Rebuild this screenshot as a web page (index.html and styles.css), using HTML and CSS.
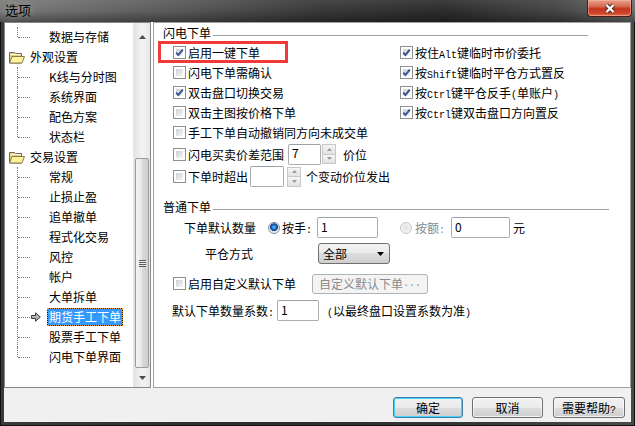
FILE: index.html
```html
<!DOCTYPE html>
<html lang="zh-CN">
<head>
  <meta charset="UTF-8" />
  <title>选项</title>
  <link rel="stylesheet" href="styles.css">
</head>
<body>
  <div class="window">
    <div class="titlebar">
      <span class="title">选项</span>
      <span class="close">
        <svg width="14" height="11" viewBox="0 0 14 11"><path d="M3.5 2 L10.5 9 M10.5 2 L3.5 9" stroke="#4a2a24" stroke-width="4.4"/><path d="M3.5 2 L10.5 9 M10.5 2 L3.5 9" stroke="#fff" stroke-width="2.4"/></svg>
      </span>
    </div>
    <div class="client">
      <div class="main">
        <div class="tree">
          <ul class="nodes">
            <li class="node leaf last"><span class="label">数据与存储</span></li>
            <li class="node folder">
              <svg class="folder-icon" width="16" height="13" viewBox="0 0 16 13"><path d="M0.5 1.5 h5 l1 1 h6 v9.5 h-12 z" fill="#e6d27e" stroke="#6f6a5c"/><path d="M1.5 3.5 h10" stroke="#fff"/><path d="M0.5 12 l2.5 -6.5 h12.5 l-2.5 6.5 z" fill="#fff39a" stroke="#857a52"/></svg>
              <span class="label">外观设置</span>
            </li>
            <li class="node leaf"><span class="label">K线与分时图</span></li>
            <li class="node leaf"><span class="label">系统界面</span></li>
            <li class="node leaf"><span class="label">配色方案</span></li>
            <li class="node leaf last"><span class="label">状态栏</span></li>
            <li class="node folder">
              <svg class="folder-icon" width="16" height="13" viewBox="0 0 16 13"><path d="M0.5 1.5 h5 l1 1 h6 v9.5 h-12 z" fill="#e6d27e" stroke="#6f6a5c"/><path d="M1.5 3.5 h10" stroke="#fff"/><path d="M0.5 12 l2.5 -6.5 h12.5 l-2.5 6.5 z" fill="#fff39a" stroke="#857a52"/></svg>
              <span class="label">交易设置</span>
            </li>
            <li class="node leaf"><span class="label">常规</span></li>
            <li class="node leaf"><span class="label">止损止盈</span></li>
            <li class="node leaf"><span class="label">追单撤单</span></li>
            <li class="node leaf"><span class="label">程式化交易</span></li>
            <li class="node leaf"><span class="label">风控</span></li>
            <li class="node leaf"><span class="label">帐户</span></li>
            <li class="node leaf"><span class="label">大单拆单</span></li>
            <li class="node leaf current">
              <svg class="pointer" width="10" height="10" viewBox="0 0 10 10"><path d="M0.5 3.5 H4.5 V0.8 L9.3 5 L4.5 9.2 V6.5 H0.5 Z" fill="#b4b4b4" stroke="#3c3c3c"/></svg>
              <span class="label selected">期货手工下单</span>
            </li>
            <li class="node leaf"><span class="label">股票手工下单</span></li>
            <li class="node leaf last"><span class="label">闪电下单界面</span></li>
          </ul>
          <div class="vscroll">
            <div class="sbtn up"><svg width="7" height="4" viewBox="0 0 7 4"><path d="M0 4 L3.5 0 L7 4 Z" fill="#4e4e4e"/></svg></div>
            <div class="thumb"><span class="grip"></span></div>
            <div class="sbtn down"><svg width="7" height="4" viewBox="0 0 7 4"><path d="M0 0 L3.5 4 L7 0 Z" fill="#4e4e4e"/></svg></div>
          </div>
        </div>

        <div class="panel">
          <div class="legend legend-flash"><span>闪电下单</span><i class="rule"></i></div>
          <div class="flash-grid">
            <div class="opt">
              <span class="mark-box"></span>
              <span class="cb"><svg width="11" height="11" viewBox="0 0 11 11"><path d="M2.2 5.6 L4.4 8 L8.8 2.6" fill="none" stroke="#3b5795" stroke-width="2"/></svg></span>
              <span>启用一键下单</span>
            </div>
            <div class="opt">
              <span class="cb"><svg width="11" height="11" viewBox="0 0 11 11"><path d="M2.2 5.6 L4.4 8 L8.8 2.6" fill="none" stroke="#3b5795" stroke-width="2"/></svg></span>
              <span>按住<span class="mono">Alt</span>键临时市价委托</span>
            </div>
            <div class="opt">
              <span class="cb"></span>
              <span>闪电下单需确认</span>
            </div>
            <div class="opt">
              <span class="cb"><svg width="11" height="11" viewBox="0 0 11 11"><path d="M2.2 5.6 L4.4 8 L8.8 2.6" fill="none" stroke="#3b5795" stroke-width="2"/></svg></span>
              <span>按<span class="mono">Shift</span>键临时平仓方式置反</span>
            </div>
            <div class="opt">
              <span class="cb"><svg width="11" height="11" viewBox="0 0 11 11"><path d="M2.2 5.6 L4.4 8 L8.8 2.6" fill="none" stroke="#3b5795" stroke-width="2"/></svg></span>
              <span>双击盘口切换交易</span>
            </div>
            <div class="opt">
              <span class="cb"><svg width="11" height="11" viewBox="0 0 11 11"><path d="M2.2 5.6 L4.4 8 L8.8 2.6" fill="none" stroke="#3b5795" stroke-width="2"/></svg></span>
              <span>按<span class="mono">Ctrl</span>键平仓反手<span class="mono">(</span>单账户<span class="mono">)</span></span>
            </div>
            <div class="opt">
              <span class="cb"></span>
              <span>双击主图按价格下单</span>
            </div>
            <div class="opt">
              <span class="cb"><svg width="11" height="11" viewBox="0 0 11 11"><path d="M2.2 5.6 L4.4 8 L8.8 2.6" fill="none" stroke="#3b5795" stroke-width="2"/></svg></span>
              <span>按<span class="mono">Ctrl</span>键双击盘口方向置反</span>
            </div>
          </div>

          <div class="opt row-cancel">
            <span class="cb"></span>
            <span>手工下单自动撤销同方向未成交单</span>
          </div>
          <div class="opt row-spread">
            <span class="cb"></span>
            <span>闪电买卖价差范围</span>
            <span class="field spread-field">7</span>
            <span class="spin"><span class="sp"><svg width="5" height="3" viewBox="0 0 5 3"><path d="M0 3 L2.5 0 L5 3 Z" fill="#9a9a9a"/></svg></span><span class="sp"><svg width="5" height="3" viewBox="0 0 5 3"><path d="M0 0 L2.5 3 L5 0 Z" fill="#9a9a9a"/></svg></span></span>
            <span class="after-spin">价位</span>
          </div>
          <div class="opt row-over">
            <span class="cb"></span>
            <span>下单时超出</span>
            <span class="field over-field"></span>
            <span class="spin"><span class="sp"><svg width="5" height="3" viewBox="0 0 5 3"><path d="M0 3 L2.5 0 L5 3 Z" fill="#9a9a9a"/></svg></span><span class="sp"><svg width="5" height="3" viewBox="0 0 5 3"><path d="M0 0 L2.5 3 L5 0 Z" fill="#9a9a9a"/></svg></span></span>
            <span class="over-text">个变动价位发出</span>
          </div>

          <div class="legend legend-normal"><span>普通下单</span><i class="rule"></i></div>
          <div class="line row-qty">
            <span>下单默认数量</span>
            <span class="radio on"></span>
            <span class="rlabel">按手<span class="mono">:</span></span>
            <span class="field qty-field">1</span>
            <span class="radio off"></span>
            <span class="rlabel amount">按额<span class="mono">:</span></span>
            <span class="field amount-field">0</span>
            <span class="unit">元</span>
          </div>
          <div class="line row-mode">
            <span>平仓方式</span>
            <span class="combo">全部<svg width="7" height="4" viewBox="0 0 7 4"><path d="M0 0 L3.5 4 L7 0 Z" fill="#000"/></svg></span>
          </div>
          <div class="opt row-custom">
            <span class="cb"></span>
            <span>启用自定义默认下单</span>
            <span class="btn-off">自定义默认下单<span class="mono">...</span></span>
          </div>
          <div class="line row-factor">
            <span class="factor-label">默认下单数量系数<span class="mono">:</span></span>
            <span class="field factor-field">1</span>
            <span class="note"><span class="mono">(</span>以最终盘口设置系数为准<span class="mono">)</span></span>
          </div>
        </div>
      </div>

      <div class="footer">
        <button class="btn default">确定</button>
        <button class="btn">取消</button>
        <button class="btn">需要帮助<span class="mono">?</span></button>
      </div>
    </div>
  </div>
</body>
</html>
```

FILE: styles.css
```css
* {
  box-sizing: border-box;
}
body {
  margin: 0;
  background: #1b1b1b;
  font-family: "Noto Sans CJK SC", "Liberation Sans", sans-serif;
  font-size: 12px;
  color: #000;
}
.window {
  width: 635px;
  height: 426px;
  display: flex;
  flex-direction: column;
  background: linear-gradient(90deg, #3a3a3a 0%, #2c2c2c 40%, #343434 70%, #4a4a4a 100%);
  box-shadow: inset 0 0 0 1px #111;
}
.titlebar {
  height: 22px;
  display: flex;
  align-items: flex-start;
  padding-left: 5px;
  background:
    linear-gradient(180deg, rgba(255, 255, 255, 0.08) 0%, rgba(0, 0, 0, 0) 50%, rgba(0, 0, 0, 0.35) 100%),
    linear-gradient(90deg, #7a7a7a 0%, #5c5c5c 25%, #383838 50%, #2c2c2c 70%, #454545 88%, #6e6e6e 100%);
}
.title {
  font-size: 13px;
  line-height: 20px;
  text-shadow: 0 0 6px rgba(255, 255, 255, 0.45);
}
.close {
  margin-left: auto;
  margin-right: 3px;
  width: 45px;
  height: 17px;
  display: flex;
  align-items: center;
  justify-content: center;
  border: 1px solid #4e1c12;
  border-top: none;
  border-radius: 0 0 4px 4px;
  background: linear-gradient(180deg, #e7a08c 0%, #d56a4f 40%, #c0341b 55%, #d1482c 85%, #e07a5c 100%);
  box-shadow: inset 0 0 0 1px rgba(255, 200, 180, 0.45);
}
.client {
  flex: 1;
  margin: 0 4px 4px;
  background: #f0f0f0;
  display: flex;
  flex-direction: column;
}
.main {
  height: 366px;
  display: flex;
  background: #fff;
}

/* tree */
.tree {
  width: 147px;
  border: 1px solid #828790;
  display: flex;
  background: #fff;
}
.nodes {
  list-style: none;
  margin: 0;
  padding: 4px 0 0;
  flex: 1;
  overflow: hidden;
}
.node {
  height: 20px;
  display: flex;
  align-items: center;
  position: relative;
  white-space: nowrap;
}
.label {
  line-height: 16px;
  padding: 0 1px;
  border: 1px solid transparent;
}
.leaf {
  padding-left: 42px;
}
.leaf::before {
  content: "";
  position: absolute;
  left: 12px;
  top: 0;
  bottom: 0;
  border-left: 1px dotted #7a7a7a;
}
.leaf.last::before {
  bottom: 50%;
}
.leaf::after {
  content: "";
  position: absolute;
  left: 13px;
  top: 50%;
  width: 12px;
  border-top: 1px dotted #7a7a7a;
}
.folder {
  padding-left: 4px;
}
.folder-icon {
  margin-right: 3px;
}
.pointer {
  position: absolute;
  left: 26px;
  top: 5px;
}
.label.selected {
  color: #fff;
  border: 1px dotted #f0a030;
  background: linear-gradient(#3399ff, #3399ff) padding-box, #1a1a1a border-box;
}
.vscroll {
  width: 17px;
  display: flex;
  flex-direction: column;
  background: linear-gradient(90deg, #e3e3e3, #f3f3f3 50%, #e8e8e8);
  border-left: 1px solid #e6e6e6;
}
.sbtn {
  display: flex;
  align-items: center;
  justify-content: center;
}
.sbtn.up {
  height: 28px;
}
.sbtn.down {
  height: 18px;
  margin-top: auto;
}
.thumb {
  margin: 107px 1px 1px;
  height: 210px;
  border: 1px solid #9a9a9a;
  border-radius: 2px;
  background: linear-gradient(90deg, #f4f4f4, #e9e9e9 45%, #d8d8d8 55%, #cfcfcf);
  display: flex;
  align-items: center;
  justify-content: center;
}
.grip {
  width: 7px;
  height: 7px;
  background: repeating-linear-gradient(180deg, #555 0, #555 1px, #eee 1px, #eee 2px);
}

/* right panel */
.panel {
  flex: 1;
  margin-left: 2px;
  border: 1px solid #a0a0a0;
  background: #fff;
}
.legend {
  display: flex;
  align-items: center;
  height: 14px;
  padding-left: 9px;
  line-height: 14px;
}
.legend-flash {
  margin-top: 3px;
}
.legend-normal {
  margin-top: 12px;
}
.rule {
  flex: 1;
  height: 1px;
  margin: 4px 0 0 2px;
  background: #a0a0a0;
}
.legend-flash .rule {
  margin-right: 42px;
}
.legend-normal .rule {
  margin-right: 21px;
}
.mono {
  font-family: "Liberation Mono", monospace;
  font-size: 10px;
}
.flash-grid {
  display: grid;
  grid-template-columns: 227px auto;
  grid-auto-rows: 20px;
  margin-top: 2px;
  padding-left: 19px;
}
.opt {
  display: flex;
  align-items: center;
  position: relative;
  white-space: nowrap;
}
.line {
  display: flex;
  align-items: center;
  white-space: nowrap;
}
.cb {
  width: 13px;
  height: 13px;
  margin-right: 2px;
  flex-shrink: 0;
  border: 1px solid #8e8f8f;
  padding: 2px;
  background: linear-gradient(135deg, #cbcfd5, #f6f6f6) content-box, #fff;
  display: flex;
  align-items: center;
  justify-content: center;
}
.cb svg {
  flex-shrink: 0;
}
.mark-box {
  position: absolute;
  left: -15px;
  top: -1px;
  width: 130px;
  height: 22px;
  border: 3px solid #f03a3a;
}
.row-cancel {
  height: 21px;
  padding-left: 19px;
}
.row-spread {
  height: 22px;
  padding-left: 19px;
}
.row-over {
  height: 23px;
  padding-left: 19px;
}
.field {
  height: 21px;
  border: 1px solid #abadb3;
  border-top-color: #9aa0a8;
  border-radius: 2px;
  background: #fff;
  padding: 0 3px;
  line-height: 18px;
  font-size: 12px;
}
.spread-field {
  width: 33px;
  margin-left: 4px;
  line-height: 15px;
}
.over-field {
  width: 34px;
  margin-left: 2px;
}
.spin {
  width: 14px;
  height: 20px;
  display: flex;
  flex-direction: column;
}
.row-spread .spin {
  margin-left: 1px;
}
.row-over .spin {
  margin-left: 3px;
}
.sp {
  flex: 1;
  display: flex;
  align-items: center;
  justify-content: center;
  border: 1px solid #c8c8c8;
  background: linear-gradient(#f6f6f6, #e2e2e2);
}
.sp + .sp {
  border-top: none;
}
.after-spin {
  margin-left: 7px;
}
.over-text {
  margin-left: 5px;
}
.row-qty {
  height: 21px;
  margin-top: 3px;
  padding-left: 30px;
}
.radio {
  width: 12px;
  height: 12px;
  border-radius: 50%;
  flex-shrink: 0;
}
.radio.on {
  margin-left: 12px;
  border: 1px solid #7e8a99;
  background: radial-gradient(circle at 50% 42%, #8fd6ff 0, #2a86d8 1.6px, #0d3f8e 3.6px, #dfe3e8 4.2px, #f8f8f8 6px);
}
.radio.off {
  margin-left: 22px;
  border: 1px solid #c6c6c6;
  background: radial-gradient(circle at 50% 45%, #e2e2e2 0, #ececec 3px, #f6f6f6 6px);
}
.rlabel {
  width: 35px;
  margin-left: 2px;
}
.rlabel.amount {
  width: 36px;
  margin-left: 3px;
  color: #8a8a8a;
}
.qty-field {
  width: 61px;
}
.amount-field {
  width: 59px;
}
.unit {
  margin-left: 3px;
}
.row-mode {
  height: 21px;
  margin-top: 5px;
  padding-left: 51px;
}
.combo {
  width: 72px;
  height: 21px;
  margin-left: 65px;
  display: flex;
  align-items: center;
  justify-content: space-between;
  padding: 0 5px 0 4px;
  border: 1px solid #707070;
  border-radius: 3px;
  background: linear-gradient(180deg, #f2f2f2 0%, #ebebeb 50%, #dddddd 50%, #cfcfcf 100%);
}
.row-custom {
  height: 21px;
  margin-top: 9px;
  padding-left: 19px;
}
.btn-off {
  width: 116px;
  height: 20px;
  margin-left: 16px;
  display: flex;
  align-items: center;
  justify-content: center;
  border: 1px solid #adb2b5;
  border-radius: 3px;
  background: #f4f4f4;
  color: #8a8a8a;
}
.row-factor {
  height: 21px;
  margin-top: 6px;
  padding-left: 18px;
}
.factor-label {
  width: 105px;
}
.factor-field {
  width: 42px;
}
.note {
  margin-left: 8px;
}

/* footer buttons */
.footer {
  flex: 1;
  display: flex;
  justify-content: flex-end;
  align-items: flex-start;
  padding: 9px 6px 0 0;
}
.btn {
  height: 21px;
  width: 71px;
  margin-left: 9px;
  padding: 0;
  font-family: "Noto Sans CJK SC", sans-serif;
  font-size: 12px;
  color: #000;
  border: 1px solid #707070;
  border-radius: 3px;
  background: linear-gradient(180deg, #f2f2f2 0%, #ebebeb 50%, #dddddd 50%, #cfcfcf 100%);
  box-shadow: inset 0 0 0 1px rgba(255, 255, 255, 0.7);
}
.btn.default {
  width: 70px;
  border-color: #3c7fb1;
  box-shadow: inset 0 0 0 1px #48d4f8;
}
.btn:last-child {
  width: 72px;
  margin-left: 10px;
}
```
